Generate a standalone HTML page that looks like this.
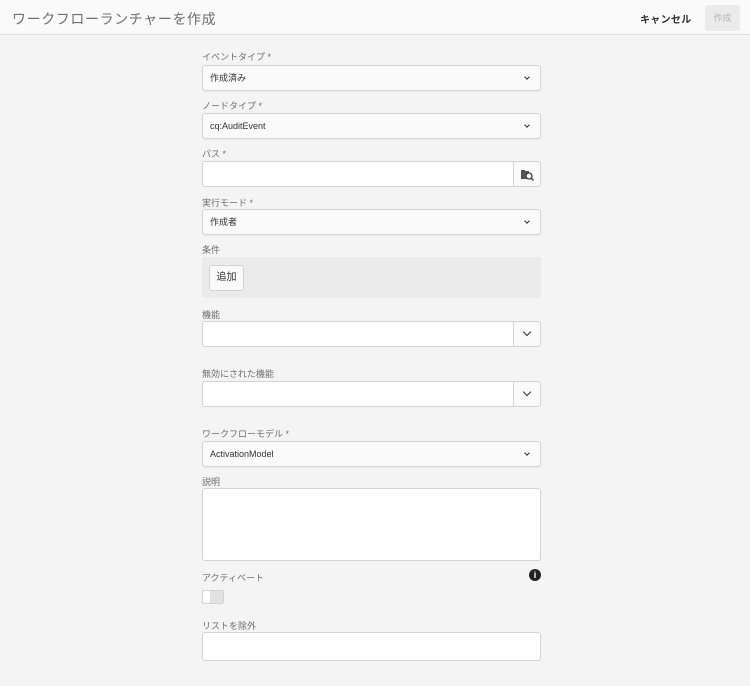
<!DOCTYPE html>
<html><head><meta charset="utf-8"><style>
*{box-sizing:border-box;margin:0;padding:0}
body{width:750px;height:686px;background:#f4f4f4;font-family:"Liberation Sans","Noto Sans CJK JP",sans-serif;position:relative;overflow:hidden;color:#4b4b4b}
.hdr{position:absolute;left:0;top:0;width:750px;height:35px;background:#fafafa;border-bottom:1px solid #e1e1e1}
.title{position:absolute;left:12px;top:9px;font-size:14px;color:#6e6e6e;letter-spacing:0.6px}
.cancel{position:absolute;left:640px;top:11px;font-size:10px;font-weight:bold;color:#323232;letter-spacing:0.3px}
.create{position:absolute;left:705px;top:5px;width:35px;height:26px;background:#ebebeb;border-radius:3px;font-size:9px;color:#b3b3b3;text-align:center;line-height:26px}
.l{position:absolute;left:202px;font-size:9px;color:#6e6e6e}
.f{position:absolute;left:202px;width:339px;background:#fff;border:1px solid #d3d3d3;border-radius:3px;font-size:9px;color:#323232;padding-left:7px}
.sel{height:26px;line-height:24px;background:#fafafa;box-shadow:0 1px 1px rgba(0,0,0,.05)}
.sel:after{content:"";position:absolute;right:11px;top:9px;width:3px;height:3px;border-right:1.3px solid #333;border-bottom:1.3px solid #333;transform:rotate(45deg)}
.btn{position:absolute;right:-1px;top:-1px;width:28px;height:26px;border:1px solid #d3d3d3;border-radius:0 3px 3px 0;background:#fafafa}
.chev{position:absolute;left:10px;top:7px;width:6px;height:6px;border-right:1.6px solid #333;border-bottom:1.6px solid #333;transform:rotate(45deg)}
</style></head><body>
<div class="hdr"><div class="title">ワークフローランチャーを作成</div><div class="cancel">キャンセル</div><div class="create">作成</div></div>

<div class="l" style="top:50px">イベントタイプ *</div>
<div class="f sel" style="top:65px">作成済み</div>
<div class="l" style="top:99px">ノードタイプ *</div>
<div class="f sel" style="top:113px">cq:AuditEvent</div>
<div class="l" style="top:147px">パス *</div>
<div class="f" style="top:161px;height:26px"><div class="btn"><svg width="28" height="26" viewBox="0 0 28 26"><rect x="7" y="9" width="8" height="8" fill="#555"/><rect x="7" y="8" width="4" height="2" fill="#555"/><circle cx="15" cy="14" r="3" fill="#fafafa" stroke="#444" stroke-width="1.3"/><line x1="17" y1="16" x2="19.5" y2="18.5" stroke="#444" stroke-width="1.5"/></svg></div></div>
<div class="l" style="top:196px">実行モード *</div>
<div class="f sel" style="top:209px">作成者</div>
<div class="l" style="top:243px">条件</div>
<div style="position:absolute;left:202px;top:257px;width:339px;height:41px;background:#ebebeb;border-radius:2px"></div>
<div style="position:absolute;left:209px;top:265px;width:35px;height:26px;background:#fafafa;border:1px solid #d3d3d3;border-radius:3px;font-size:10px;color:#323232;text-align:center;line-height:24px">追加</div>
<div class="l" style="top:308px">機能</div>
<div class="f" style="top:321px;height:26px"><div class="btn"><div class="chev"></div></div></div>
<div class="l" style="top:367px">無効にされた機能</div>
<div class="f" style="top:381px;height:26px"><div class="btn"><div class="chev"></div></div></div>
<div class="l" style="top:427px">ワークフローモデル *</div>
<div class="f sel" style="top:441px">ActivationModel</div>
<div class="l" style="top:475px">説明</div>
<div class="f" style="top:488px;height:73px"></div>
<div class="l" style="top:571px">アクティベート</div>
<div style="position:absolute;left:529px;top:569px;width:12px;height:12px;border-radius:50%;background:#222;color:#fff;font-size:9px;font-weight:bold;text-align:center;line-height:12px">i</div>
<div style="position:absolute;left:202px;top:590px;width:22px;height:14px;background:#e1e1e1;border:1px solid #d3d3d3;border-radius:2px"><div style="width:7px;height:12px;background:#fff;border-radius:2px"></div></div>
<div class="l" style="top:619px">リストを除外</div>
<div class="f" style="top:632px;height:29px"></div>
</body></html>
